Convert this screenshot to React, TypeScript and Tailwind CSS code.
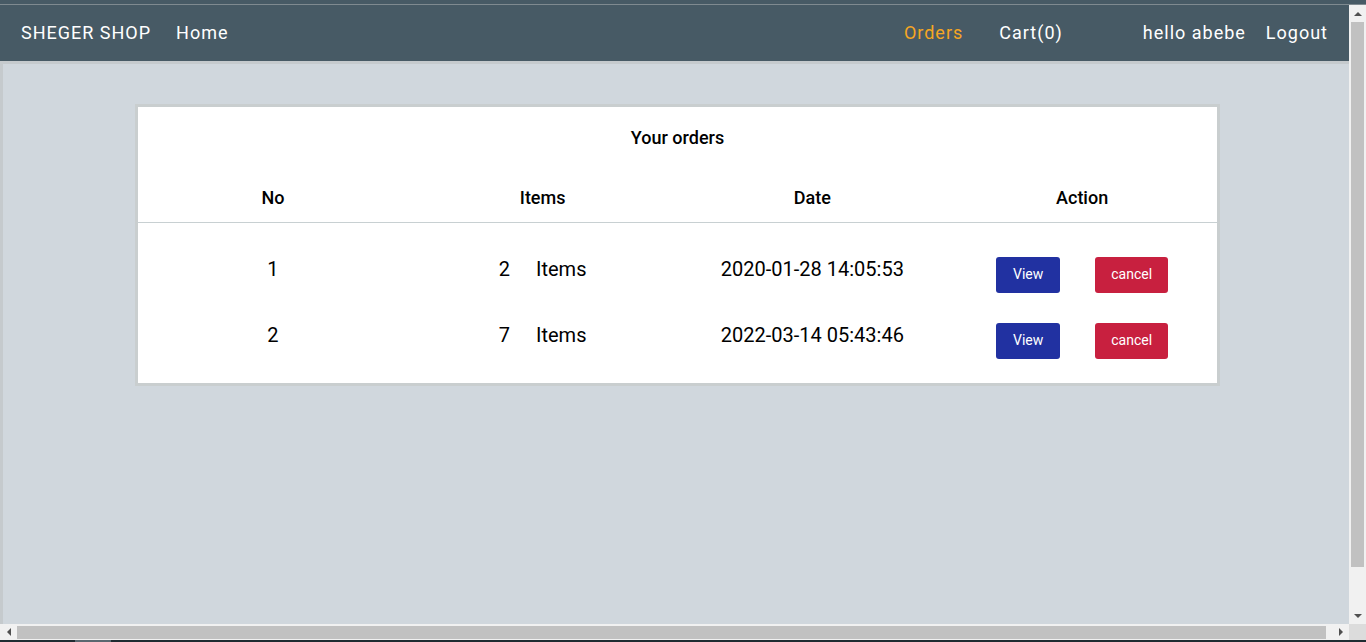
import React from "react";

interface Order {
  no: number;
  count: number;
  date: string;
}

const orders: Order[] = [
  { no: 1, count: 2, date: "2020-01-28 14:05:53" },
  { no: 2, count: 7, date: "2022-03-14 05:43:46" },
];

const Arrow: React.FC<{ dir: "up" | "down" | "left" | "right" }> = ({ dir }) => {
  const pts = {
    up: "0,6 4,2 8,6",
    down: "0,2 8,2 4,6",
    left: "6,0 6,8 2,4",
    right: "2,0 2,8 6,4",
  }[dir];
  return (
    <svg width="8" height="8" viewBox="0 0 8 8">
      <polygon points={pts} fill="#505050" />
    </svg>
  );
};

const App: React.FC = () => {
  return (
    <div className="w-[1366px] h-[642px] overflow-hidden flex flex-col font-['Roboto',sans-serif]">
      {/* window strip above the page */}
      <div className="h-[4px] bg-[#475a65]" />
      <div className="h-[1px] bg-[#7f8a90]" />

      <div className="flex h-[619px]">
        <div className="flex-1 flex flex-col overflow-hidden">
          {/* navbar */}
          <nav className="h-[56px] shrink-0 bg-[#475a65] flex items-center pb-[2px] px-[21px] text-white text-[18px] tracking-[1px]">
            <span>SHEGER SHOP</span>
            <span className="ml-[25px]">Home</span>
            <div className="ml-auto flex items-center">
              <span className="text-[#f5a623]">Orders</span>
              <span className="ml-[36px]">Cart(0)</span>
              <span className="ml-[80px]">hello abebe</span>
              <span className="ml-[20px]">Logout</span>
            </div>
          </nav>

          {/* page body */}
          <main className="flex-1 w-[1360px] border-t-[3px] border-l-[3px] border-[#c5cacd] bg-[#d0d7dd] pt-[40px]">
            <div className="ml-[132px] w-[1085px] bg-white border-[3px] border-[#c9cecf] text-black">
              <div className="h-[60px] flex items-center justify-center text-[18px] font-medium">
                Your orders
              </div>
              <div className="h-[56px] grid grid-cols-4 items-center pt-[5px] border-b border-[#c8d0d2] text-[18px] font-medium text-center">
                <span>No</span>
                <span>Items</span>
                <span>Date</span>
                <span>Action</span>
              </div>
              <div className="pt-[34px] pb-[24px] flex flex-col gap-[30px]">
                {orders.map((o) => (
                  <div key={o.no} className="grid grid-cols-4 items-start text-[20px] leading-[24px] text-center">
                    <span>{o.no}</span>
                    <span className="flex justify-center gap-[26px]">
                      <span>{o.count}</span>
                      <span>Items</span>
                    </span>
                    <span>{o.date}</span>
                    <span className="flex justify-center gap-[35px]">
                      <button className="w-[64px] h-[36px] pb-[2px] rounded-[3px] bg-[#2131a1] text-white text-[14px] leading-none">
                        View
                      </button>
                      <button className="w-[73px] h-[36px] pb-[2px] rounded-[3px] bg-[#c8203f] text-white text-[14px] leading-none">
                        cancel
                      </button>
                    </span>
                  </div>
                ))}
              </div>
            </div>
          </main>
        </div>

        {/* vertical scrollbar */}
        <div className="w-[17px] shrink-0 bg-[#f1f1f1] flex flex-col items-center">
          <div className="h-[17px] flex items-center justify-center">
            <Arrow dir="up" />
          </div>
          <div className="w-[13px] h-[545px] bg-[#c1c1c1]" />
          <div className="mt-auto h-[17px] flex items-center justify-center">
            <Arrow dir="down" />
          </div>
        </div>
      </div>

      {/* horizontal scrollbar */}
      <div className="flex h-[16px]">
        <div className="flex-1 bg-[#f1f1f1] flex items-center">
          <div className="w-[17px] flex justify-center">
            <Arrow dir="left" />
          </div>
          <div className="w-[1309px] h-[13px] bg-[#c1c1c1]" />
          <div className="ml-auto w-[17px] flex justify-center">
            <Arrow dir="right" />
          </div>
        </div>
        <div className="w-[17px] bg-[#dcdcdc]" />
      </div>

      <div className="h-[2px] bg-[#1f2b31] flex">
        <div className="ml-[75px] w-[36px] bg-[#5a6870]" />
      </div>
    </div>
  );
};

export default App;
